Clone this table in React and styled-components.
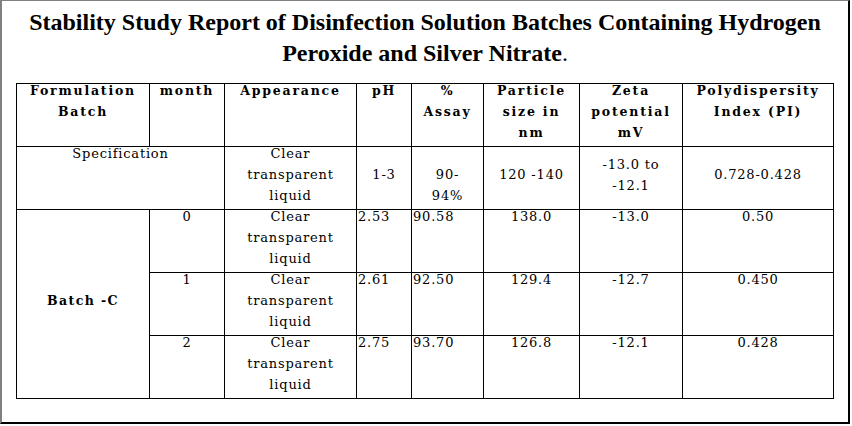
import styled, { createGlobalStyle } from "styled-components";

const GlobalStyle = createGlobalStyle`
  html, body {
    margin: 0;
    padding: 0;
    background: #ffffff;
  }
`;

const COLS = [133, 75, 132, 55, 72, 96, 103, 151];

const HEADERS = [
  ["Formulation", "Batch"],
  ["month"],
  ["Appearance"],
  ["pH"],
  ["%", "Assay"],
  ["Particle", "size in", "nm"],
  ["Zeta", "potential", "mV"],
  ["Polydispersity", "Index (PI)"],
];

const APPEARANCE = ["Clear", "transparent", "liquid"];

const BATCH_ROWS = [
  { month: "0", ph: "2.53", assay: "90.58", size: "138.0", zeta: "-13.0", pi: "0.50" },
  { month: "1", ph: "2.61", assay: "92.50", size: "129.4", zeta: "-12.7", pi: "0.450" },
  { month: "2", ph: "2.75", assay: "93.70", size: "126.8", zeta: "-12.1", pi: "0.428" },
];

const Lines = ({ lines }) => (
  <Text>
    {lines.map((l, i) => (
      <Line key={i}>{l}</Line>
    ))}
  </Text>
);

const App = () => {
  return (
    <>
      <GlobalStyle />
      <Frame>
        <Title>
          Stability Study Report of Disinfection Solution Batches Containing Hydrogen
          <br />
          Peroxide and Silver Nitrate<Period>.</Period>
        </Title>
        <Table>
          <colgroup>
            {COLS.map((w, i) => (
              <col key={i} style={{ width: w }} />
            ))}
          </colgroup>
          <tbody>
            <Row>
              {HEADERS.map((h, i) => (
                <HeadCell key={i}>
                  <Lines lines={h} />
                </HeadCell>
              ))}
            </Row>
            <Row>
              <Cell colSpan={2}>
                <Lines lines={["Specification"]} />
              </Cell>
              <Cell>
                <Lines lines={APPEARANCE} />
              </Cell>
              <Cell $valign="middle">
                <Lines lines={["1-3"]} />
              </Cell>
              <Cell $valign="bottom">
                <Lines lines={["90-", "94%"]} />
              </Cell>
              <Cell $valign="middle">
                <Lines lines={["120 -140"]} />
              </Cell>
              <Cell $valign="middle">
                <Lines lines={["-13.0 to", "-12.1"]} />
              </Cell>
              <Cell $valign="middle">
                <Lines lines={["0.728-0.428"]} />
              </Cell>
            </Row>
            {BATCH_ROWS.map((r, i) => (
              <Row key={r.month}>
                {i === 0 && (
                  <BatchCell rowSpan={3}>
                    <Lines lines={["Batch -C"]} />
                  </BatchCell>
                )}
                <Cell>
                  <Lines lines={[r.month]} />
                </Cell>
                <Cell>
                  <Lines lines={APPEARANCE} />
                </Cell>
                <Cell $align="left">
                  <Lines lines={[r.ph]} />
                </Cell>
                <Cell $align="left">
                  <Lines lines={[r.assay]} />
                </Cell>
                <Cell>
                  <Lines lines={[r.size]} />
                </Cell>
                <Cell>
                  <Lines lines={[r.zeta]} />
                </Cell>
                <Cell>
                  <Lines lines={[r.pi]} />
                </Cell>
              </Row>
            ))}
          </tbody>
        </Table>
      </Frame>
    </>
  );
};

export default App;

const Frame = styled.div`
  box-sizing: border-box;
  width: 850px;
  height: 424px;
  border-style: solid;
  border-color: #808080 #000000 #000000 #808080;
  border-width: 1px 2px 2px 2px;
  padding: 6px 0 0 14px;
  background: #ffffff;
`;

const Title = styled.h1`
  margin: 0 0 14px -14px;
  width: 846px;
  font-family: "Liberation Serif", "Times New Roman", serif;
  font-weight: bold;
  font-size: 24px;
  line-height: 31px;
  text-align: center;
  color: #000000;
`;

const Period = styled.span`
  font-weight: normal;
`;

const Table = styled.table`
  table-layout: fixed;
  border-collapse: collapse;
  width: 818px;
  font-family: "DejaVu Serif", serif;
  color: #000000;
`;

const Row = styled.tr`
  height: 63px;
`;

const Cell = styled.td`
  border: 1px solid #000000;
  padding: 0 1px;
  vertical-align: ${(p) => p.$valign || "top"};
  text-align: ${(p) => p.$align || "center"};
  font-size: 13px;
  letter-spacing: 0.8px;
  white-space: nowrap;
`;

const HeadCell = styled.th`
  border: 1px solid #000000;
  padding: 0 1px;
  vertical-align: top;
  text-align: center;
  font-size: 12.5px;
  font-weight: bold;
  letter-spacing: 1.8px;
  white-space: nowrap;
`;

const BatchCell = styled(Cell)`
  vertical-align: middle;
  font-size: 12.5px;
  font-weight: bold;
  letter-spacing: 1.4px;
`;

const Text = styled.div`
  margin: -4px 0 3px;
`;

const Line = styled.div`
  line-height: 21px;
`;
